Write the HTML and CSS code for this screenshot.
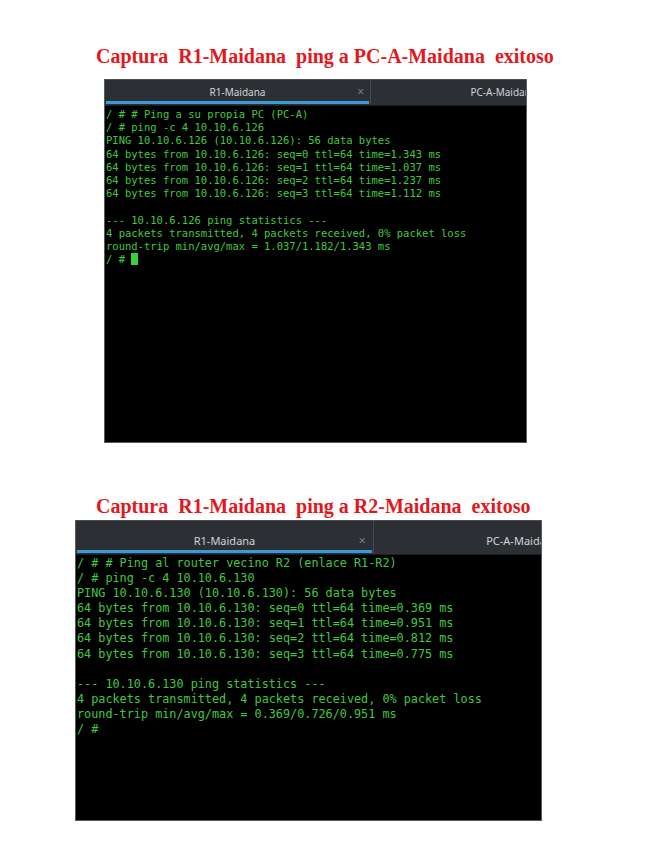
FILE: index.html
```html
<!DOCTYPE html>
<html>
<head>
<meta charset="utf-8">
<link rel="stylesheet" href="styles.css">
</head>
<body>
<div class="page">
  <h2 class="title title-one">Captura  R1-Maidana  ping a PC-A-Maidana  exitoso</h2>
  <div class="shot shot-one">
    <div class="tabbar">
      <div class="tab active"><span class="tab-label">R1-Maidana</span><span class="close">×</span></div>
      <div class="tab"><span class="tab-label">PC-A-Maidana</span></div>
    </div>
    <pre class="term">/ # # Ping a su propia PC (PC-A)
/ # ping -c 4 10.10.6.126
PING 10.10.6.126 (10.10.6.126): 56 data bytes
64 bytes from 10.10.6.126: seq=0 ttl=64 time=1.343 ms
64 bytes from 10.10.6.126: seq=1 ttl=64 time=1.037 ms
64 bytes from 10.10.6.126: seq=2 ttl=64 time=1.237 ms
64 bytes from 10.10.6.126: seq=3 ttl=64 time=1.112 ms

--- 10.10.6.126 ping statistics ---
4 packets transmitted, 4 packets received, 0% packet loss
round-trip min/avg/max = 1.037/1.182/1.343 ms
/ # <span class="cursor"> </span></pre>
  </div>

  <h2 class="title title-two">Captura  R1-Maidana  ping a R2-Maidana  exitoso</h2>
  <div class="shot shot-two">
    <div class="tabbar">
      <div class="tab active"><span class="tab-label">R1-Maidana</span><span class="close">×</span></div>
      <div class="tab"><span class="tab-label">PC-A-Maidana</span></div>
    </div>
    <pre class="term">/ # # Ping al router vecino R2 (enlace R1-R2)
/ # ping -c 4 10.10.6.130
PING 10.10.6.130 (10.10.6.130): 56 data bytes
64 bytes from 10.10.6.130: seq=0 ttl=64 time=0.369 ms
64 bytes from 10.10.6.130: seq=1 ttl=64 time=0.951 ms
64 bytes from 10.10.6.130: seq=2 ttl=64 time=0.812 ms
64 bytes from 10.10.6.130: seq=3 ttl=64 time=0.775 ms

--- 10.10.6.130 ping statistics ---
4 packets transmitted, 4 packets received, 0% packet loss
round-trip min/avg/max = 0.369/0.726/0.951 ms
/ #</pre>
  </div>
</div>
</body>
</html>
```

FILE: styles.css
```css
html, body {
  margin: 0;
  padding: 0;
  background: #ffffff;
}

.page {
  width: 670px;
  height: 861px;
  padding-top: 44px;
  box-sizing: border-box;
  overflow: hidden;
}

.title {
  margin: 0;
  padding-left: 96px;
  font-family: "Liberation Serif", serif;
  font-weight: bold;
  font-size: 20px;
  line-height: 24px;
  color: #e5161c;
  white-space: pre;
}

.title-one {
  margin-bottom: 11px;
}

.title-two {
  margin-top: 51px;
  margin-bottom: 2px;
}

.shot {
  background: #000000;
  border: 1px solid #5a5a5a;
  border-top: 0;
  box-sizing: border-box;
  overflow: hidden;
  display: flex;
  flex-direction: column;
}

.shot-one {
  margin-left: 104px;
  width: 423px;
  height: 364px;
}

.shot-two {
  margin-left: 75px;
  width: 467px;
  height: 301px;
}

.tabbar {
  display: flex;
  background: #2c2f34;
  border-top: 1px solid #4a4d52;
  border-bottom: 1px solid #1a1c1f;
  flex: none;
  overflow: hidden;
}

.tab {
  flex: none;
  position: relative;
  display: flex;
  align-items: center;
  justify-content: center;
  font-family: "Noto Sans", "Open Sans", sans-serif;
  color: #d2d4d6;
  border-right: 1px solid #45484d;
  box-sizing: border-box;
}

.tab.active::after {
  content: "";
  position: absolute;
  left: 1px;
  right: 1px;
  bottom: 1px;
  height: 3px;
  background: #3e9ad6;
}

.close {
  position: absolute;
  color: #7a7d82;
}

.shot-one .tabbar {
  height: 25px;
}

.shot-one .tab {
  width: 266px;
  font-size: 10px;
  padding-bottom: 2px;
}

.shot-one .close {
  right: 6px;
  font-size: 12px;
}

.shot-two .tabbar {
  height: 33px;
}

.shot-two .tab {
  width: 298px;
  font-size: 11px;
  padding-top: 5px;
}

.shot-two .close {
  right: 7px;
  font-size: 13px;
}

.term {
  margin: 0;
  font-family: "DejaVu Sans Mono", "Liberation Mono", monospace;
  color: #43c743;
  white-space: pre;
}

.shot-one .term {
  font-size: 10.5px;
  line-height: 13.2px;
  padding: 2px 0 0 1px;
}

.shot-two .term {
  font-size: 11.8px;
  line-height: 15.1px;
  padding: 1px 0 0 1px;
}

.cursor {
  background: #3ad23a;
}
```
